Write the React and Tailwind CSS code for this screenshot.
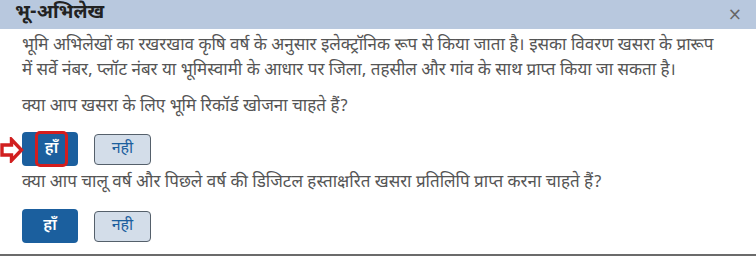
import React from "react";

const hindi = { fontFamily: '"Noto Sans Devanagari", "Noto Sans", "Lohit Devanagari", Mangal, sans-serif' };

function YesNo({ highlight }) {
    return (
        <div className="flex items-center gap-4 h-[34px]">
            <div className="relative">
                {highlight && (
                    <svg className="absolute -left-[22px] top-[5px]" width="24" height="26" viewBox="0 0 24 26">
                        <path d="M2 8 H11.5 V2.5 L21.5 13 L11.5 23.5 V18 H2 Z" fill="white" stroke="#d11f1f" strokeWidth="3.4" strokeLinejoin="miter" />
                    </svg>
                )}
                <button className="w-[56px] h-[34px] rounded-[4px] bg-[#1b5f9e] text-white text-[16px] font-semibold flex items-center justify-center">
                    {highlight ? (
                        <span className="ml-[3px] w-[33px] h-[36px] border-[3px] border-[#d41d1d] rounded-[5px] flex items-center justify-center">हाँ</span>
                    ) : "हाँ"}
                </button>
            </div>
            <button className="w-[57px] h-[31px] rounded-[4px] bg-[#d3dde9] border border-[#55606b] text-[#1b5f9e] text-[16px] flex items-center justify-center">
                नही
            </button>
        </div>
    );
}

export default function App() {
    return (
        <div className="w-[756px] h-[256px] overflow-hidden bg-white border-b-2 border-[#6b6b6b] flex flex-col" style={hindi}>
            <div className="h-[29px] bg-[#b8c8de] flex items-center justify-between pl-[15px] pr-[14px]">
                <h1 className="text-[19px] font-bold text-[#222]">भू-अभिलेख</h1>
                <span className="text-[#666] text-[17px] leading-none" style={{ fontFamily: '"DejaVu Sans", sans-serif' }}>×</span>
            </div>
            <div className="pl-[22px] pr-4 pt-[5px] text-[17px] text-[#555] leading-[25px]">
                <p>
                    भूमि अभिलेखों का रखरखाव कृषि वर्ष के अनुसार इलेक्ट्रॉनिक रूप से किया जाता है। इसका विवरण खसरा के प्रारूप
                    <br />
                    में सर्वे नंबर, प्लॉट नंबर या भूमिस्वामी के आधार पर जिला, तहसील और गांव के साथ प्राप्त किया जा सकता है।
                </p>
                <p className="mt-[11px]">क्या आप खसरा के लिए भूमि रिकॉर्ड खोजना चाहते हैं?</p>
                <div className="mt-[12px]">
                    <YesNo highlight />
                </div>
                <p className="mt-[5px]">क्या आप चालू वर्ष और पिछले वर्ष की डिजिटल हस्ताक्षरित खसरा प्रतिलिपि प्राप्त करना चाहते हैं?</p>
                <div className="mt-[13px]">
                    <YesNo />
                </div>
            </div>
        </div>
    );
}
